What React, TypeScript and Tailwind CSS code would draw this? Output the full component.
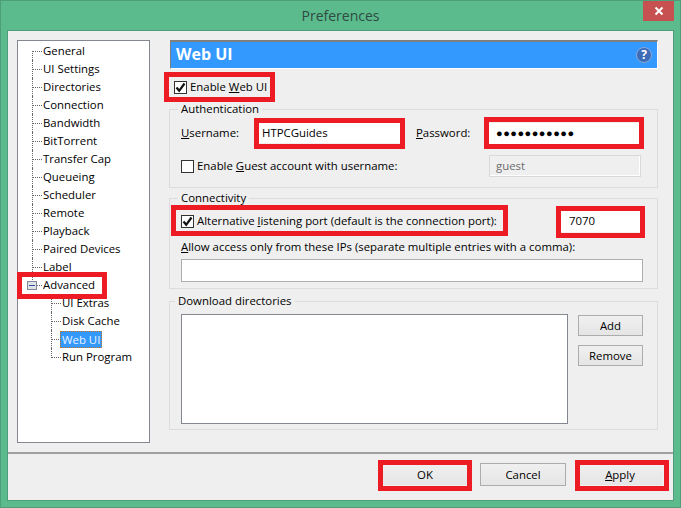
const font = { fontFamily: '"Open Sans", "Noto Sans", sans-serif' };

const top = ["UI Settings","Directories","Connection","Bandwidth","BitTorrent","Transfer Cap","Queueing","Scheduler","Remote","Playback","Paired Devices","Label"];

function Row({ children, first, last, indent, minus }: { children: React.ReactNode; first?: boolean; last?: boolean; indent?: boolean; minus?: boolean }) {
  return (
    <div className={indent ? "relative flex h-[18px] items-center pl-[33px]" : "relative flex h-[18px] items-center pl-[14px]"}>
      <div className={first ? "h-[9px] w-0 self-end border-l border-dotted border-[#666]" : last ? "h-[10px] w-0 self-start border-l border-dotted border-[#666]" : "h-full w-0 border-l border-dotted border-[#666]"} />
      <div className="w-[9px] border-t border-dotted border-[#666]" />
      {minus && (
        <div className="absolute left-[9px] top-[5px] flex h-[9px] w-[10px] items-center justify-center border border-[#7e8a99] bg-[#dfe3e8]">
          <div className="h-px w-[6px] bg-[#2c4f9e]" />
        </div>
      )}
      {children}
    </div>
  );
}

function Check({ checked }: { checked?: boolean }) {
  return (
    <div className="flex h-[13px] w-[13px] shrink-0 items-center justify-center border border-[#333] bg-white">
      {checked && (
        <svg width="11" height="11" viewBox="0 0 11 11"><path d="M1.5 5.5 L4.2 8.8 L9.5 1.5" fill="none" stroke="#111" strokeWidth="2.2" /></svg>
      )}
    </div>
  );
}

function Btn({ children, className = "" }: { children: React.ReactNode; className?: string }) {
  return (
    <div className={"flex items-center justify-center border border-[#acacac] bg-gradient-to-b from-[#f0f0f0] to-[#e5e5e5] text-black " + className}>{children}</div>
  );
}

function Mark({ className }: { className: string }) {
  return <div className={"pointer-events-none absolute border-[5px] border-[#ed1c24] " + className} />;
}

export default function App() {
  return (
    <div style={font} className="relative flex h-[508px] w-[681px] flex-col overflow-hidden border border-[#4f9e7a] bg-[#5bbb8c] text-[11.4px] leading-[16px] text-black">
      <div className="grid h-[29px] shrink-0 grid-cols-[1fr_auto_1fr]">
        <div />
        <div className="pt-[5px] text-[14px] leading-[20px] text-[#2f4a44]">Preferences</div>
        <div className="flex justify-end pr-[6px]">
          <div className="flex h-[20px] w-[31px] items-center justify-center bg-[#c75050]">
            <svg width="10" height="10" viewBox="0 0 10 10"><path d="M1.5 1.5 L8.5 8.5 M8.5 1.5 L1.5 8.5" stroke="#fff" strokeWidth="2" /></svg>
          </div>
        </div>
      </div>

      <div className="mx-[6px] mb-[6px] flex flex-1 flex-col border border-[#4f9e7a] bg-[#efefef]">
        <div className="flex h-[421px] shrink-0 gap-[20px] pl-[9px] pt-[9px]">
          <div className="h-[403px] w-[133px] shrink-0 border border-[#828790] bg-white pt-px">
            <Row first><span className="ml-px">General</span></Row>
            {top.map((t) => (
              <Row key={t}><span className="ml-px">{t}</span></Row>
            ))}
            <Row last minus><span className="ml-px">Advanced</span></Row>
            <Row indent><span className="ml-px">UI Extras</span></Row>
            <Row indent><span className="ml-px">Disk Cache</span></Row>
            <Row indent>
              <span className="-ml-px border border-dotted border-[#c9701f] bg-[#3399ff] px-px leading-[15px] text-[#eaf3ff]">Web UI</span>
            </Row>
            <Row indent last><span className="ml-px">Run Program</span></Row>
          </div>

          <div className="w-[488px]">
            <div className="flex h-[29px] items-center justify-between border-l border-t-2 border-b border-r border-l-[#7f7f7f] border-t-[#7f7f7f] border-b-white border-r-white bg-[#3399ff] pl-[5px] pr-[4px]">
              <span className="-mt-[2px] text-[16px] font-bold text-white">Web UI</span>
              <svg width="16" height="16" viewBox="0 0 16 16" className="mr-[1px]">
                <circle cx="8" cy="8" r="7.5" fill="#3d6cb8" stroke="#8aa8d6" />
                <text x="8" y="12" textAnchor="middle" fontSize="12" fontWeight="700" fill="#fff" style={font}>?</text>
              </svg>
            </div>

            <div className="mt-[10px] flex h-[16px] items-center gap-[3px] pl-[4px]">
              <Check checked />
              <span>Enable <u>W</u>eb UI</span>
            </div>

            <fieldset className="-ml-px mt-[6px] h-[87px] border border-[#dcdcdc] pl-[11px]">
              <legend className="-ml-[3px] px-[3px]">Authentication</legend>
              <div className="mt-[1px] flex h-[30px] items-center">
                <span className="w-[73px]"><u>U</u>sername:</span>
                <div className="flex h-[20px] w-[147px] items-center bg-white pl-[8px]">HTPCGuides</div>
                <span className="ml-[15px] w-[68px]"><u>P</u>assword:</span>
                <div className="flex h-[21px] w-[155px] items-center bg-white pl-[12px] text-[11px] tracking-[0.5px]">●●●●●●●●●●●</div>
              </div>
              <div className="mt-[7px] flex h-[22px] items-center">
                <Check />
                <span className="ml-[3px]">Enable <u>G</u>uest account with username:</span>
                <div className="ml-auto mr-[16px] flex h-[22px] w-[152px] items-center border border-[#d9d9d9] pl-[6px] text-[#6d6d6d] shadow-[inset_-1px_-1px_0_#fff]">guest</div>
              </div>
            </fieldset>

            <fieldset className="-ml-px mt-[2px] h-[99px] border border-[#dcdcdc] pl-[11px]">
              <legend className="-ml-[3px] px-[3px]">Connectivity</legend>
              <div className="flex h-[30px] items-center">
                <Check checked />
                <span className="ml-[3px]">Alternative <u>l</u>istening port (default is the connection port):</span>
                <div className="ml-auto mr-[16px] flex h-[21px] w-[85px] items-center bg-white pl-[13px]">7070</div>
              </div>
              <div className="mt-[3px]"><u>A</u>llow access only from these IPs (separate multiple entries with a comma):</div>
              <div className="mt-[4px] h-[23px] w-[462px] border border-[#abadb3] bg-white" />
            </fieldset>

            <fieldset className="-ml-px mt-[4px] h-[137px] border border-[#dcdcdc] pl-[11px]">
              <legend className="-ml-[6px] px-[3px]">Download directories</legend>
              <div className="mt-[5px] flex gap-[10px]">
                <div className="h-[110px] w-[387px] border border-[#828790] bg-white" />
                <div className="flex flex-col gap-[9px] pt-px">
                  <Btn className="h-[21px] w-[65px]">Add</Btn>
                  <Btn className="h-[21px] w-[65px]">Remove</Btn>
                </div>
              </div>
            </fieldset>
          </div>
        </div>

        <div className="flex flex-1 items-start justify-end gap-[11px] border-t-2 border-t-[#a0a0a0] pr-[10px] pt-[9px]">
          <Btn className="mr-px h-[23px] w-[86px] border-[#f0f0f0]">OK</Btn>
          <Btn className="h-[23px] w-[86px]">Cancel</Btn>
          <Btn className="h-[23px] w-[86px] border-[#f0f0f0]"><span><u>A</u>pply</span></Btn>
        </div>
      </div>

      <Mark className="left-[163px] top-[71px] h-[30px] w-[111px]" />
      <Mark className="left-[253px] top-[117px] h-[31px] w-[151px]" />
      <Mark className="left-[483px] top-[116px] h-[32px] w-[160px]" />
      <Mark className="left-[170px] top-[204px] h-[31px] w-[337px]" />
      <Mark className="left-[555px] top-[205px] h-[32px] w-[89px]" />
      <Mark className="left-[16px] top-[271px] h-[27px] w-[90px]" />
      <Mark className="left-[377px] top-[459px] h-[31px] w-[94px]" />
      <Mark className="left-[574px] top-[459px] h-[31px] w-[94px]" />
    </div>
  );
}
